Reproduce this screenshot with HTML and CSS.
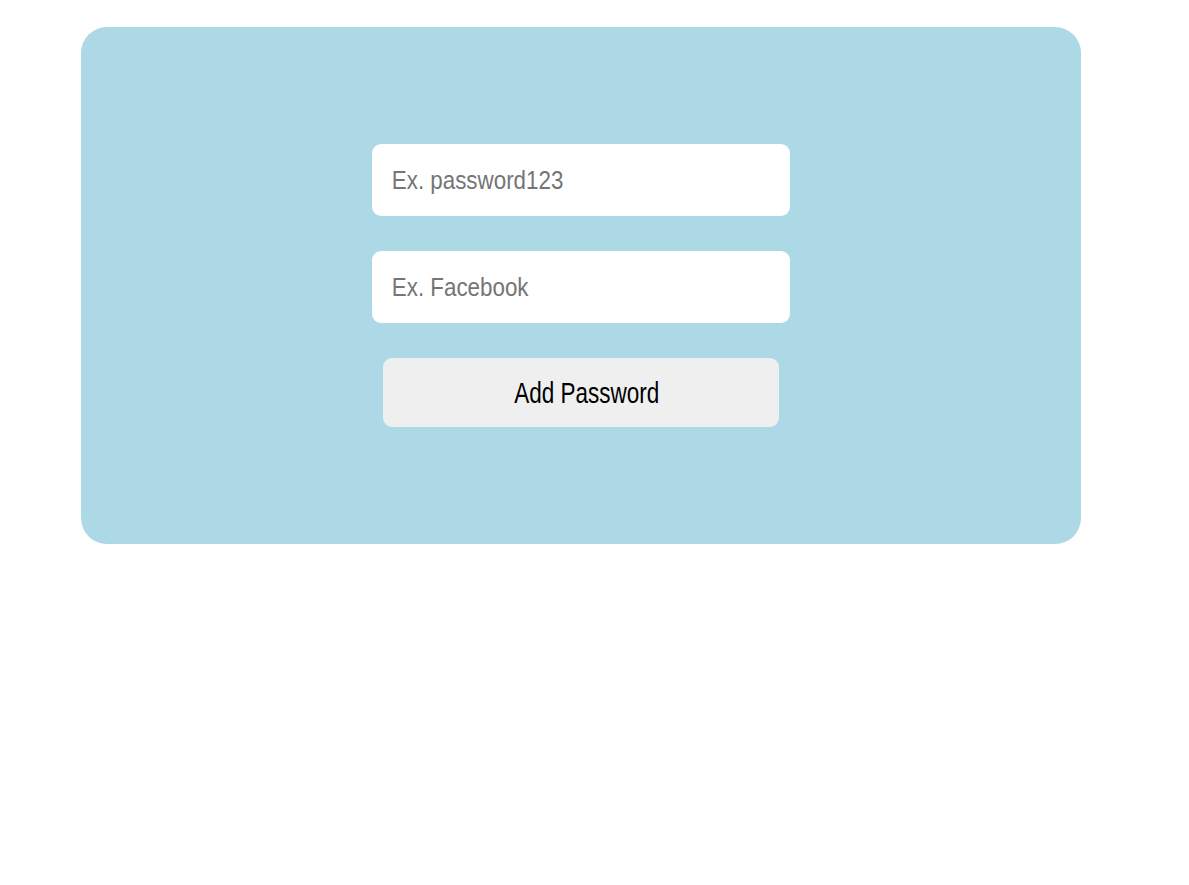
FILE: index.html
```html
<!DOCTYPE html>
<html>
<head>
<meta charset="utf-8">
<link rel="stylesheet" href="styles.css">
</head>
<body>
<div class="card">
  <form class="form">
    <input class="field" type="text" placeholder="Ex. password123">
    <input class="field" type="text" placeholder="Ex. Facebook">
    <button class="btn" type="button"><span class="btn-label">Add Password</span></button>
  </form>
</div>
</body>
</html>
```
FILE: styles.css
```css
html, body {
  margin: 0;
  padding: 0;
  background: #ffffff;
}
body {
  padding: 27px 0 0 81px;
  font-family: "Liberation Sans", Arial, sans-serif;
}
.card {
  width: 1000px;
  height: 517px;
  box-sizing: border-box;
  background: #add8e6;
  border-radius: 26px;
  display: flex;
  align-items: center;
  justify-content: center;
}
.form {
  display: flex;
  flex-direction: column;
  align-items: center;
  gap: 35px;
}
.field {
  width: 486px;
  height: 72px;
  box-sizing: border-box;
  border: none;
  outline: none;
  border-radius: 10.5px / 9px;
  background: #ffffff;
  padding: 0 23px;
  font-family: "Liberation Sans", Arial, sans-serif;
  font-size: 26px;
  color: #222;
  transform: scaleX(0.86);
}
.field::placeholder {
  color: #757575;
}
.btn {
  width: 396px;
  height: 69px;
  border: none;
  border-radius: 9px;
  background: #efefef;
  color: #000;
  font-family: "Liberation Sans", Arial, sans-serif;
  font-size: 30px;
  padding: 0 0 0 12px;
}
.btn-label {
  display: inline-block;
  transform: scaleX(0.75);
}
```
